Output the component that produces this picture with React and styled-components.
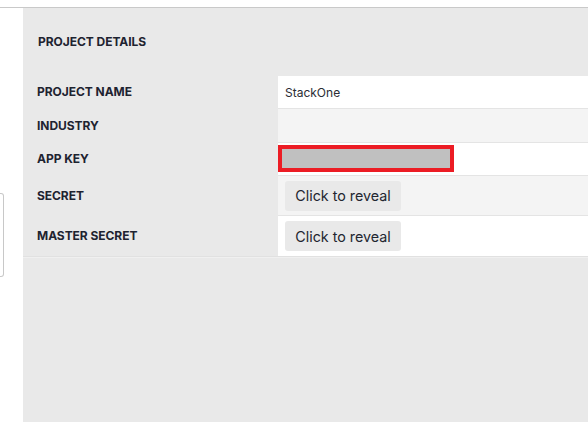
import React from "react";
import styled, { createGlobalStyle } from "styled-components";

const Global = createGlobalStyle`
  html, body { margin: 0; padding: 0; background: #fff; }
  body { font-family: Inter, "Noto Sans", sans-serif; }
  * { box-sizing: border-box; }
`;

const Page = styled.div`
  width: 588px;
  height: 422px;
  overflow: hidden;
  display: flex;
  flex-direction: column;
`;

const TopBar = styled.div`
  height: 8px;
  flex: none;
  border-bottom: 1px solid #c9c9c9;
  background: #fff;
`;

const Body = styled.div`
  flex: 1;
  display: flex;
`;

const Side = styled.div`
  width: 23px;
  flex: none;
  background: #fff;
  padding-top: 185px;
`;

const SideCard = styled.div`
  width: 4px;
  height: 84px;
  border: 1px solid #c8c8c8;
  border-left: none;
  border-radius: 0 3px 3px 0;
  background: #fff;
`;

const Panel = styled.div`
  flex: 1;
  background: #e9e9e9;
  display: flex;
  flex-direction: column;
`;

const Title = styled.div`
  height: 68px;
  padding: 26px 0 0 15px;
  font-size: 12px;
  font-weight: 700;
  color: #1e2330;
  letter-spacing: -0.05px;
`;

const Table = styled.div`
  display: flex;
  flex-direction: column;
  border-bottom: 1px solid #e1e1e1;
  box-shadow: 0 1px 0 #f0f0f0;
`;

const Row = styled.div`
  display: grid;
  grid-template-columns: 255px 1fr;
  height: ${(p) => p.$h}px;
`;

const Label = styled.div`
  display: flex;
  align-items: center;
  padding: 0 0 2px 14px;
  font-size: 12px;
  font-weight: 700;
  color: #1e2330;
  letter-spacing: -0.05px;
`;

const Value = styled.div`
  display: flex;
  align-items: center;
  padding-left: ${(p) => (p.$flush ? 0 : 7)}px;
  background: ${(p) => (p.$alt ? "#f4f4f4" : "#fff")};
  border-bottom: ${(p) => (p.$last ? "none" : "1px solid #e4e4e4")};
  font-size: 12px;
  color: #2a2d34;
`;

const Masked = styled.div`
  width: 176px;
  height: 27px;
  border: 4px solid #ec1c24;
  background: #c0c0c0;
  margin-top: -2px;
`;

const RevealButton = styled.button`
  width: 116px;
  height: 30px;
  border: none;
  border-radius: 3px;
  background: #e9e9e9;
  font-family: Inter, "Noto Sans", sans-serif;
  font-size: 14.3px;
  color: #222630;
  padding: 0;
  cursor: pointer;
`;

export default function App() {
  return (
    <Page>
      <Global />
      <TopBar />
      <Body>
        <Side>
          <SideCard />
        </Side>
        <Panel>
          <Title>PROJECT DETAILS</Title>
          <Table>
            <Row $h={33}>
              <Label>PROJECT NAME</Label>
              <Value>StackOne</Value>
            </Row>
            <Row $h={34}>
              <Label>INDUSTRY</Label>
              <Value $alt />
            </Row>
            <Row $h={33}>
              <Label>APP KEY</Label>
              <Value $flush>
                <Masked />
              </Value>
            </Row>
            <Row $h={40}>
              <Label>SECRET</Label>
              <Value $alt>
                <RevealButton>Click to reveal</RevealButton>
              </Value>
            </Row>
            <Row $h={40}>
              <Label>MASTER SECRET</Label>
              <Value $last>
                <RevealButton>Click to reveal</RevealButton>
              </Value>
            </Row>
          </Table>
        </Panel>
      </Body>
    </Page>
  );
}
